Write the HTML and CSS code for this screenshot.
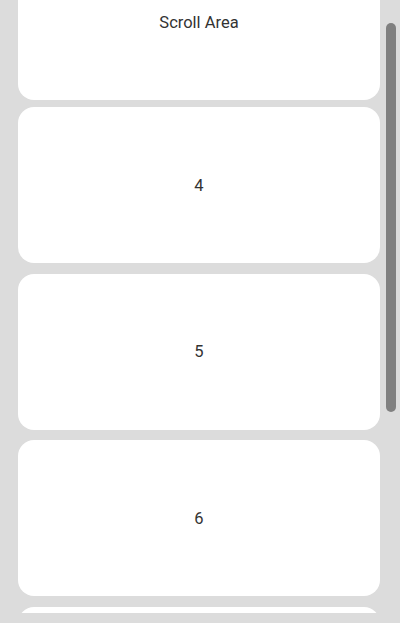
FILE: index.html
```html
<!DOCTYPE html>
<html>
<head>
<meta charset="utf-8">
<link rel="stylesheet" href="styles.css">
</head>
<body>
<div class="scroll">
  <div class="list">
    <div class="card card-first">Scroll Area</div>
    <div class="card">4</div>
    <div class="card">5</div>
    <div class="card">6</div>
    <div class="card"></div>
  </div>
  <div class="scrollbar"></div>
</div>
</body>
</html>
```
FILE: styles.css
```css
html, body {
  margin: 0;
  padding: 0;
  background: #dcdcdc;
  font-family: Roboto, "Noto Sans", sans-serif;
}
.scroll {
  position: relative;
  height: 613px;
  overflow: hidden;
}
.list {
  display: flex;
  flex-direction: column;
  gap: 10.5px;
  padding: 0 20px 0 18px;
  margin-top: -56px;
}
.card {
  flex: none;
  height: 156px;
  background: #ffffff;
  border-radius: 16px;
  display: flex;
  align-items: center;
  justify-content: center;
  font-size: 16.5px;
  color: #333333;
}
.card-first {
  margin-bottom: -3.5px;
  padding-top: 1px;
  box-sizing: border-box;
}
.scrollbar {
  position: absolute;
  top: 23px;
  left: 386px;
  width: 10px;
  height: 389px;
  border-radius: 5px;
  background: #808080;
}
```
